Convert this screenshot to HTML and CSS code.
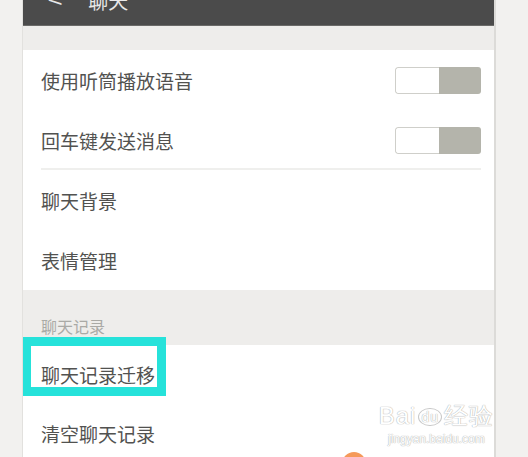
FILE: index.html
```html
<!DOCTYPE html>
<html>
<head>
  <title>聊天</title>
  <link rel="stylesheet" href="styles.css">
</head>
<body>
  <div class="screen">
    <div class="top-bar">
      <span class="back">&lt;</span>
      <span class="title">聊天</span>
    </div>
    <div class="band"></div>

    <div class="row">
      <span class="label">使用听筒播放语音</span>
      <div class="switch"><span class="knob"></span><span class="track"></span></div>
    </div>
    <div class="row">
      <span class="label">回车键发送消息</span>
      <div class="switch"><span class="knob"></span><span class="track"></span></div>
    </div>
    <div class="divider"></div>
    <div class="row">
      <span class="label">聊天背景</span>
    </div>
    <div class="row">
      <span class="label">表情管理</span>
    </div>

    <div class="section-head">聊天记录</div>

    <div class="row highlighted">
      <span class="label">聊天记录迁移</span>
      <div class="mark"></div>
    </div>
    <div class="row">
      <span class="label">清空聊天记录</span>
      <div class="watermark">
        <div class="wm-logo">Bai<span class="wm-du">du</span>经验</div>
        <div class="wm-url">jingyan.baidu.com</div>
      </div>
      <div class="dot"></div>
    </div>
  </div>
</body>
</html>
```

FILE: styles.css
```css
body {
  margin: 0;
  background-color: #f2f1ef;
  font-family: "Noto Sans CJK SC", "Noto Sans", sans-serif;
  height: 457px;
  overflow: hidden;
}

.screen {
  margin-left: 22px;
  width: 474px;
  height: 457px;
  background-color: #ffffff;
  border-left: 1px solid #e2e1de;
  border-right: 2px solid #dcdbd8;
  box-sizing: border-box;
  position: relative;
  overflow: hidden;
}

.top-bar {
  height: 25px;
  background-color: #4b4b4b;
  border-bottom: 1px solid #6a6a68;
  color: #e8e8e8;
  display: flex;
  align-items: flex-end;
  overflow: hidden;
}

.back {
  font-size: 22px;
  line-height: 22px;
  margin-left: 26px;
  margin-bottom: 16px;
  transform: scaleX(1.2);
}

.title {
  font-size: 20px;
  line-height: 20px;
  margin-left: 27px;
  margin-bottom: 14px;
}

.band {
  height: 24px;
  background-color: #eeedeb;
}

.row {
  height: 60px;
  display: flex;
  align-items: center;
  justify-content: space-between;
  padding: 0 13px 0 18px;
  position: relative;
}

.label {
  font-size: 19px;
  color: #525250;
}

.switch {
  width: 86px;
  height: 27px;
  display: flex;
  border-radius: 3px;
  overflow: hidden;
}

.knob {
  width: 43px;
  background-color: #ffffff;
  border: 1px solid #cfcfca;
  border-right: none;
  border-radius: 3px 0 0 3px;
}

.track {
  flex: 1;
  background-color: #b4b4ab;
}

.divider {
  height: 2px;
  background-color: #efefed;
  margin: -2px 13px 0 18px;
}

.section-head {
  height: 55px;
  background-color: #eeedeb;
  color: #aaaaa6;
  font-size: 16px;
  padding-left: 18px;
  display: flex;
  align-items: flex-end;
  box-sizing: border-box;
  padding-bottom: 7px;
}

.highlighted {
  height: 58px;
}

.mark {
  position: absolute;
  left: -1px;
  top: -8px;
  width: 144px;
  height: 59px;
  border: 9px solid #26e2da;
  box-sizing: border-box;
}

.watermark {
  position: absolute;
  right: 0;
  top: 0;
  color: #ffffff;
  text-align: center;
  text-shadow: 0 0 1px #b0b0b0, 0 0 1px #b0b0b0;
}

.wm-logo {
  font-family: "Liberation Sans", sans-serif;
  font-size: 24px;
  line-height: 26px;
  letter-spacing: 1px;
}

.wm-du {
  font-size: 14px;
  border: 1px solid #c8c8c8;
  border-radius: 50%;
  padding: 0 2px;
  margin: 0 2px;
  position: relative;
  top: -2px;
}

.wm-url {
  font-family: "Liberation Sans", sans-serif;
  font-size: 12px;
  line-height: 14px;
}

.dot {
  position: absolute;
  left: 319px;
  top: 49px;
  width: 24px;
  height: 24px;
  border-radius: 50%;
  background-color: #f59a5a;
}
```
